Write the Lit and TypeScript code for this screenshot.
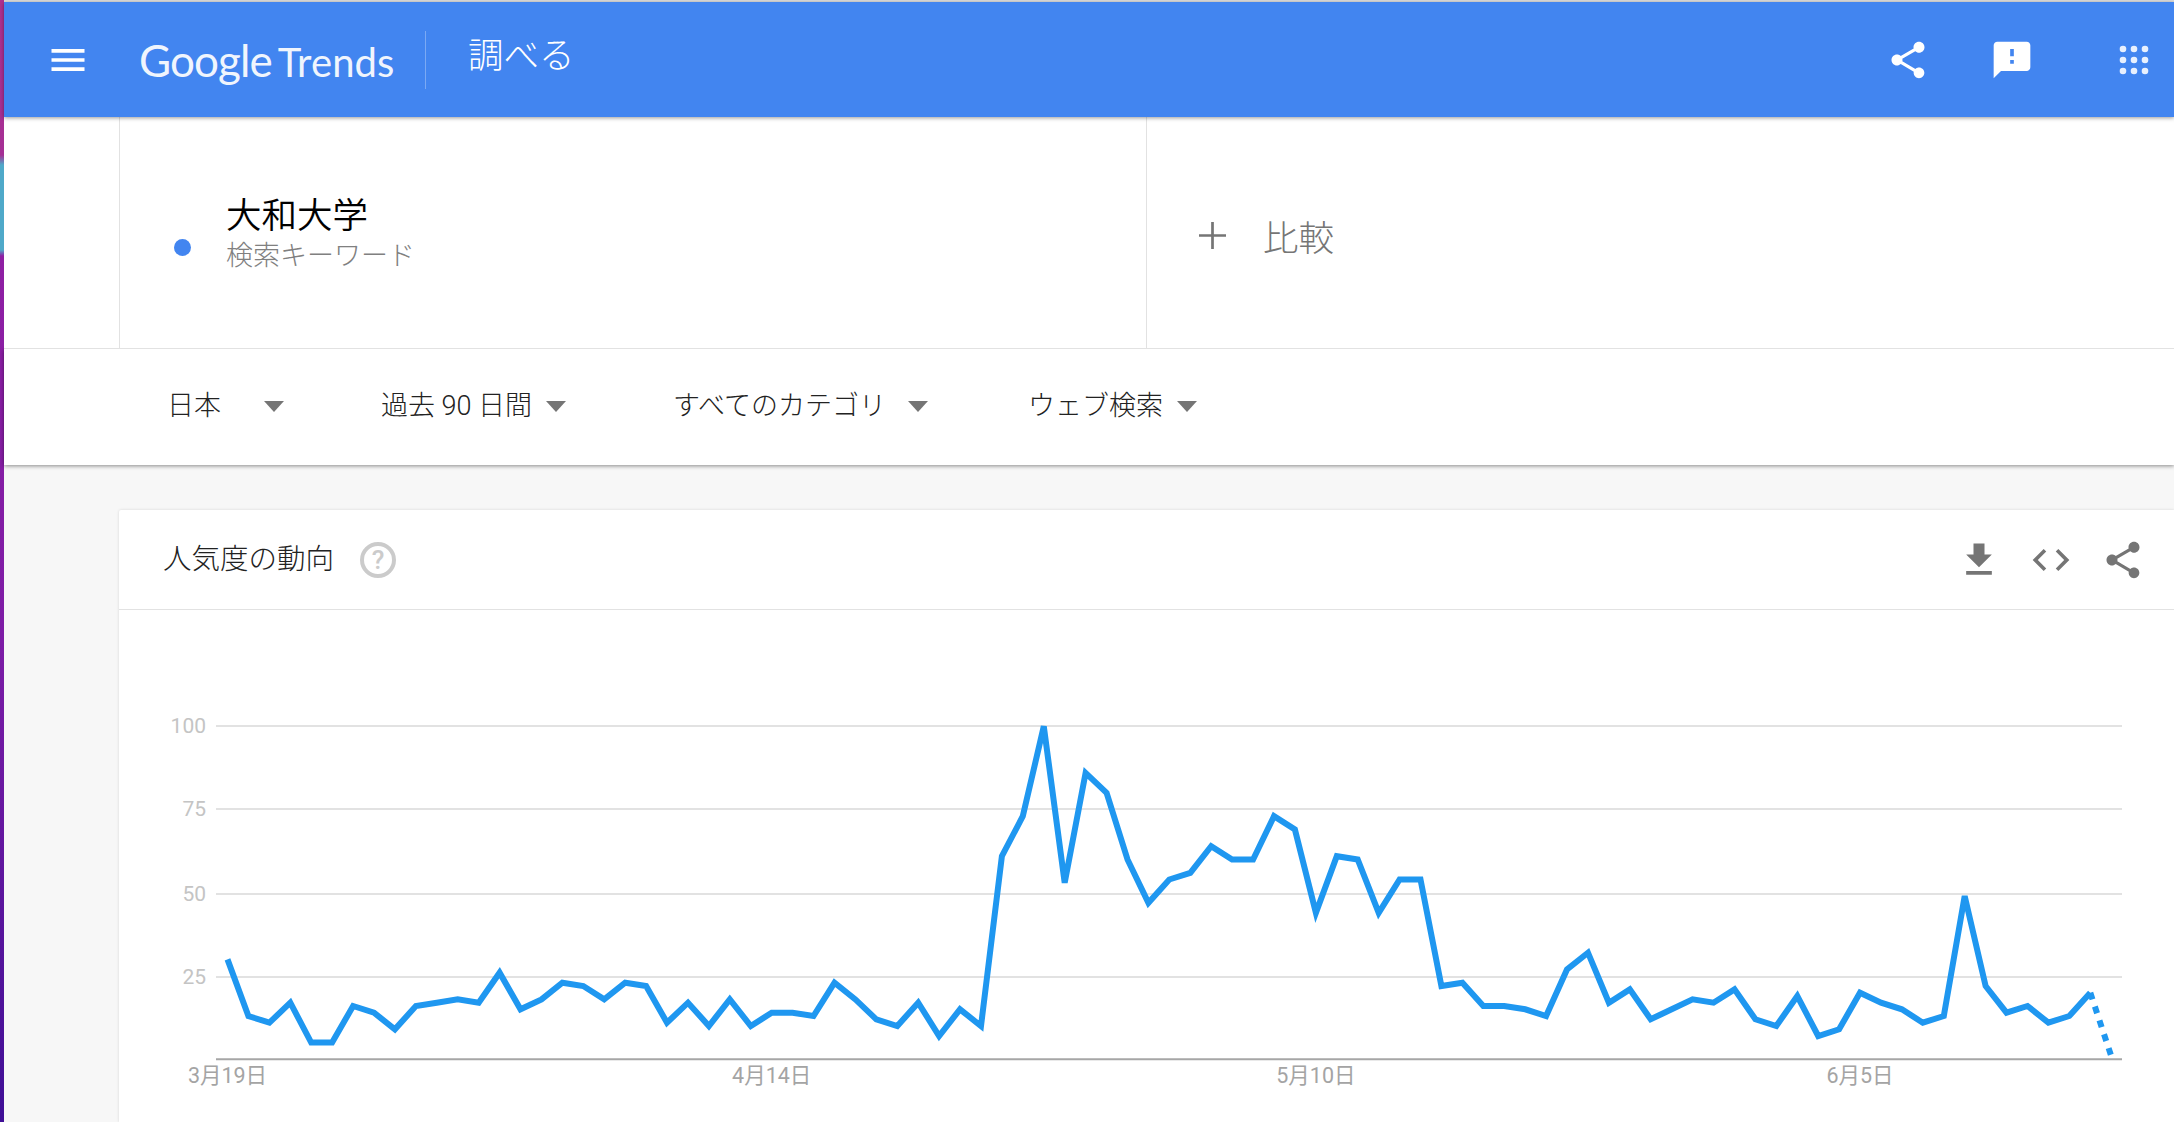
import { LitElement, html, css, svg } from 'lit';
import { customElement } from 'lit/decorators.js';

// trend values read off the chart, one per day
const VALUES = [
  30, 13, 11, 17, 5, 5, 16, 14, 9, 16, 17, 18, 17, 26, 15, 18, 23, 22, 18, 23, 22, 11, 17, 10, 18, 10, 14, 14, 13, 23,
  18, 12, 10, 17, 7, 15, 10, 61, 73, 100, 53, 86, 80, 60, 47, 54, 56, 64, 60, 60, 73, 69, 44, 61, 60, 44, 54, 54, 22,
  23, 16, 16, 15, 13, 27, 32, 17, 21, 12, 15, 18, 17, 21, 12, 10, 19, 7, 9, 20, 17, 15, 11, 13, 49, 22, 14, 16, 11,
  13, 20, 1,
];
const X0 = 227.5;
const STEP = 20.93;
const BASE = 1059.3;
const UNIT = 3.33;

const px = (i: number) => X0 + i * STEP;
const py = (v: number) => BASE - v * UNIT;

const GRID = [
  { label: '100', y: 726 },
  { label: '75', y: 809 },
  { label: '50', y: 894 },
  { label: '25', y: 977 },
];
const DATES = [
  { label: '3月19日', i: 0 },
  { label: '4月14日', i: 26 },
  { label: '5月10日', i: 52 },
  { label: '6月5日', i: 78 },
];
const FILTERS = [
  { label: '日本', gap: 43 },
  { label: '過去 90 日間', gap: 14 },
  { label: 'すべてのカテゴリ', gap: 22 },
  { label: 'ウェブ検索', gap: 14 },
];

const SHARE =
  'M18 16.08c-.76 0-1.44.3-1.96.77L8.91 12.7c.05-.23.09-.46.09-.7s-.04-.47-.09-.7l7.05-4.11c.54.5 1.25.81 2.04.81 1.66 0 3-1.34 3-3s-1.34-3-3-3-3 1.34-3 3c0 .24.04.47.09.7L8.04 9.81C7.5 9.31 6.79 9 6 9c-1.66 0-3 1.34-3 3s1.34 3 3 3c.79 0 1.5-.31 2.04-.81l7.12 4.16c-.05.21-.08.43-.08.65 0 1.61 1.31 2.92 2.92 2.92 1.61 0 2.92-1.31 2.92-2.92s-1.31-2.92-2.92-2.92z';
const FEEDBACK = 'M20 2H4c-1.1 0-1.99.9-1.99 2L2 22l4-4h14c1.1 0 2-.9 2-2V4c0-1.1-.9-2-2-2zm-7 12h-2v-2h2v2zm0-4h-2V6h2v4z';
const MENU = 'M3 18h18v-2H3v2zm0-5h18v-2H3v2zm0-7v2h18V6H3z';
const DOWNLOAD = 'M19 9h-4V3H9v6H5l7 7 7-7zM5 18v2h14v-2H5z';
const CODE = 'M9.4 16.6L4.8 12l4.6-4.6L8 6l-6 6 6 6 1.4-1.4zm5.2 0l4.6-4.6-4.6-4.6L16 6l6 6-6 6-1.4-1.4z';

@customElement('app-root')
export class AppRoot extends LitElement {
  static styles = css`
    :host {
      display: flex;
      width: 2174px;
      height: 1122px;
      overflow: hidden;
      background: #f7f7f7;
      font-family: Roboto, 'Noto Sans CJK JP', sans-serif;
    }

    .desktop-edge {
      flex: none;
      width: 4px;
      background: linear-gradient(
        to bottom,
        #b0308f 0,
        #a52f95 155px,
        #4fa9c9 165px,
        #4fa9c9 250px,
        #8f1fa3 256px,
        #7d1ca6 640px,
        #3f0f96 1122px
      );
    }

    .main {
      flex: 1;
      min-width: 0;
      display: flex;
      flex-direction: column;
    }

    .topline {
      flex: none;
      height: 2px;
      background: #dcdcdc;
    }

    .icon {
      flex: none;
      width: 44px;
      height: 44px;
      fill: currentColor;
      display: block;
    }

    /* blue bar */
    .header {
      flex: none;
      height: 115px;
      display: flex;
      align-items: center;
      background: #4285f0;
      color: #fff;
      padding: 0 18px 0 42px;
      position: relative;
      z-index: 3;
      box-shadow: 0 1px 4px rgba(0, 0, 0, 0.4);
    }

    .logo {
      margin-left: 49px;
      width: 255px;
      white-space: nowrap;
      font-family: Lato, Roboto, sans-serif;
      color: #fff;
      opacity: 0.92;
    }

    .logo .g {
      font-size: 44px;
      letter-spacing: -0.9px;
    }

    .logo .t {
      font-size: 40px;
      margin-left: 6px;
      letter-spacing: 0.1px;
    }

    .divider {
      width: 1px;
      height: 58px;
      margin: 0 42px 0 31px;
      background: rgba(255, 255, 255, 0.3);
    }

    .page-title {
      font-size: 35.5px;
      font-weight: 300;
      line-height: 1;
      margin-bottom: 5px;
    }

    .header-actions {
      margin-left: auto;
      display: flex;
      gap: 60px;
    }

    .apps {
      margin-left: 18px;
      fill: rgba(255, 255, 255, 0.88);
    }

    /* search term row */
    .terms {
      flex: none;
      height: 231px;
      display: flex;
      background: #fff;
      border-bottom: 1px solid #e2e2e2;
      position: relative;
      z-index: 2;
    }

    .gutter {
      flex: none;
      width: 115px;
      border-right: 1px solid #e2e2e2;
    }

    .term {
      flex: none;
      width: 1027px;
      border-right: 1px solid #e2e2e2;
      display: flex;
      padding: 77px 0 0 54px;
      box-sizing: border-box;
    }

    .dot {
      flex: none;
      width: 17px;
      height: 17px;
      margin-top: 45px;
      border-radius: 50%;
      background: #4285f0;
    }

    .term-text {
      margin-left: 35px;
    }

    .term-name {
      font-size: 35.5px;
      line-height: 44px;
      font-weight: 350;
      color: #000;
    }

    .term-kind {
      font-size: 27px;
      line-height: 37px;
      font-weight: 300;
      color: #808080;
    }

    .compare {
      flex: 1;
      display: flex;
      align-items: center;
      padding: 5px 0 0 52px;
      color: #757575;
      font-size: 35.5px;
      font-weight: 300;
    }

    .plus {
      width: 27px;
      height: 27px;
      margin-right: 37px;
      fill: currentColor;
    }

    /* filters */
    .filters {
      flex: none;
      height: 116px;
      display: grid;
      grid-template-columns: 214px 292px 355px auto;
      justify-content: start;
      align-items: center;
      padding: 0 0 0 163px;
      background: #fff;
      position: relative;
      z-index: 1;
      box-shadow: 0 1px 4px rgba(0, 0, 0, 0.45);
    }

    .filter {
      display: flex;
      align-items: center;
      font-size: 27px;
      font-weight: 300;
      color: #222;
    }

    .filter-label {
      margin-bottom: 8px;
    }

    .caret {
      flex: none;
      width: 0;
      height: 0;
      margin-top: -2px;
      border-left: 10px solid transparent;
      border-right: 10px solid transparent;
      border-top: 11px solid #757575;
    }

    /* chart card */
    .card {
      flex: 1;
      min-height: 0;
      margin: 45px 0 0 115px;
      display: flex;
      flex-direction: column;
      background: #fff;
      border-radius: 2px 0 0 0;
      box-shadow: 0 0 3px rgba(0, 0, 0, 0.14);
    }

    .card-head {
      flex: none;
      height: 100px;
      display: flex;
      align-items: center;
      padding: 0 29px 0 44px;
      border-bottom: 1px solid #e2e2e2;
      box-sizing: border-box;
    }

    .card-title {
      font-size: 28.5px;
      font-weight: 300;
      color: #222;
      margin-bottom: 7px;
    }

    .help {
      width: 36px;
      height: 36px;
      margin-left: 26px;
      box-sizing: border-box;
      border: 4px solid #cbcbcb;
      border-radius: 50%;
      display: flex;
      align-items: center;
      justify-content: center;
      color: #cbcbcb;
      font: 500 26px Roboto, sans-serif;
    }

    .card-actions {
      margin-left: auto;
      display: flex;
      gap: 28px;
      color: #757575;
    }

    .chart {
      flex: 1;
      min-height: 0;
      display: block;
      width: 100%;
    }

    .grid {
      stroke: #e2e2e2;
      stroke-width: 2;
    }

    .axis {
      stroke: #a6a6a6;
      stroke-width: 2;
    }

    .line {
      fill: none;
      stroke: #1f97f0;
      stroke-width: 6;
    }

    .line.partial {
      stroke-dasharray: 7 7.6;
    }

    .y-label {
      font-size: 21px;
      fill: #c4c4c4;
      text-anchor: end;
      dominant-baseline: central;
    }

    .x-label {
      font-size: 21.5px;
      fill: #a4a4a4;
      text-anchor: middle;
      dominant-baseline: central;
    }
  `;

  private icon(d: string) {
    return html`<svg class="icon" viewBox="0 0 24 24"><path d=${d}></path></svg>`;
  }

  private renderHeader() {
    return html`
      <header class="header">
        ${this.icon(MENU)}
        <div class="logo"><span class="g">Google</span><span class="t">Trends</span></div>
        <div class="divider"></div>
        <div class="page-title">調べる</div>
        <div class="header-actions">
          ${this.icon(SHARE)} ${this.icon(FEEDBACK)}
          <svg class="icon apps" viewBox="0 0 44 44">
            ${[11, 22, 33].map((cy) => [11, 22, 33].map((cx) => svg`<circle cx=${cx} cy=${cy} r="3.3"></circle>`))}
          </svg>
        </div>
      </header>
    `;
  }

  private renderChart() {
    const points = VALUES.map((v, i) => `${px(i).toFixed(1)},${py(v).toFixed(1)}`);
    const solid = points.slice(0, -1).join(' ');
    const partial = points.slice(-2).join(' ');
    return html`
      <svg class="chart" viewBox="119 610 2055 512" preserveAspectRatio="none">
        ${GRID.map(
          (g) => svg`
            <line class="grid" x1="216" x2="2122" y1=${g.y} y2=${g.y}></line>
            <text class="y-label" x="206" y=${g.y}>${g.label}</text>
          `,
        )}
        <line class="axis" x1="216" x2="2122" y1=${BASE} y2=${BASE}></line>
        ${DATES.map((d) => svg`<text class="x-label" x=${px(d.i)} y="1075">${d.label}</text>`)}
        <polyline class="line" points=${solid}></polyline>
        <polyline class="line partial" points=${partial}></polyline>
      </svg>
    `;
  }

  render() {
    return html`
      <div class="desktop-edge"></div>
      <div class="main">
        <div class="topline"></div>
        ${this.renderHeader()}
        <section class="terms">
          <div class="gutter"></div>
          <div class="term">
            <span class="dot"></span>
            <div class="term-text">
              <div class="term-name">大和大学</div>
              <div class="term-kind">検索キーワード</div>
            </div>
          </div>
          <div class="compare">
            <svg class="plus" viewBox="0 0 28 28"><path d="M12.6 0h2.8v12.6H28v2.8H15.4V28h-2.8V15.4H0v-2.8h12.6z"></path></svg>
            比較
          </div>
        </section>
        <section class="filters">
          ${FILTERS.map(
            (f) => html`
              <div class="filter">
                <span class="filter-label" style="margin-right: ${f.gap}px">${f.label}</span>
                <span class="caret"></span>
              </div>
            `,
          )}
        </section>
        <section class="card">
          <div class="card-head">
            <div class="card-title">人気度の動向</div>
            <div class="help">?</div>
            <div class="card-actions">${this.icon(DOWNLOAD)} ${this.icon(CODE)} ${this.icon(SHARE)}</div>
          </div>
          ${this.renderChart()}
        </section>
      </div>
    `;
  }
}
